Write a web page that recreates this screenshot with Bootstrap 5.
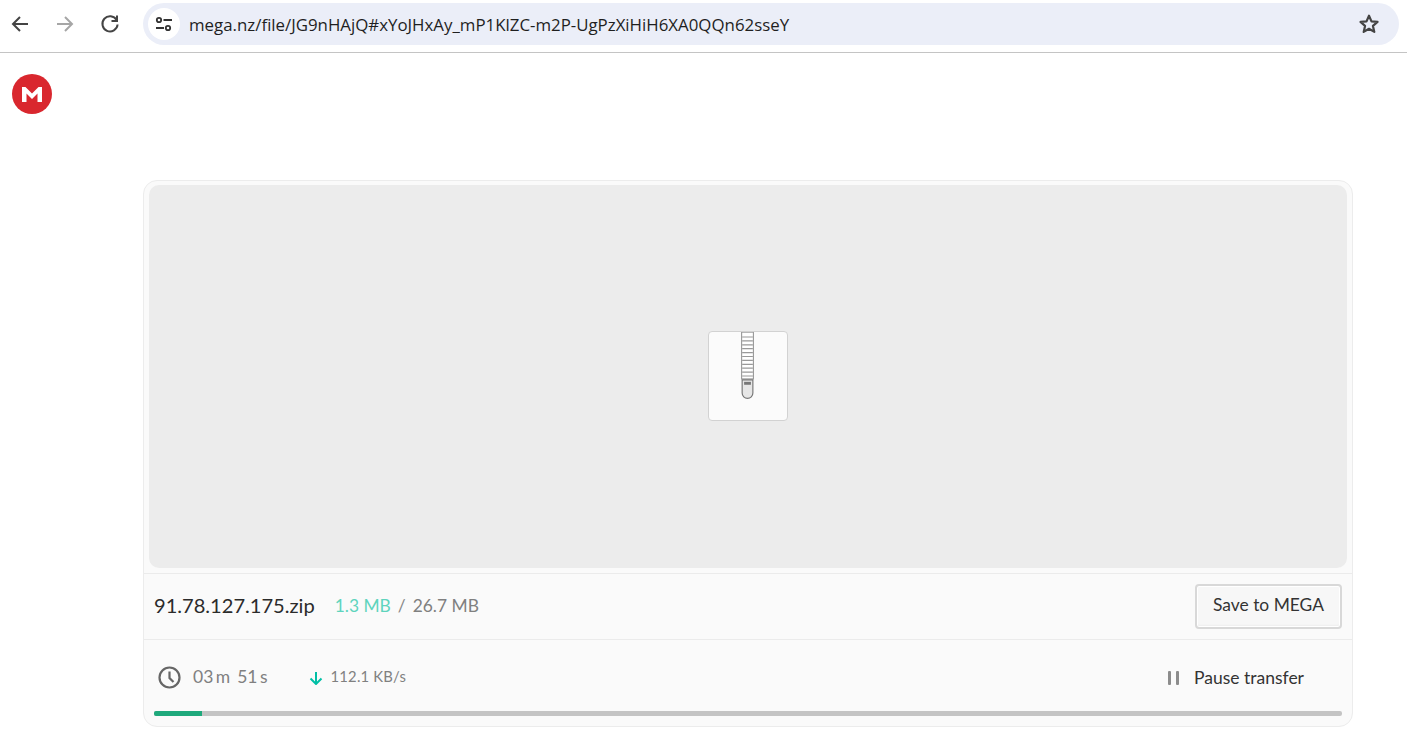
<!DOCTYPE html>
<html lang="en">
<head>
<meta charset="utf-8">
<title>MEGA</title>
<link href="https://cdn.jsdelivr.net/npm/bootstrap@5.3.0/dist/css/bootstrap.min.css" rel="stylesheet">
<style>
html,body{height:730px;overflow:hidden;background:#fff;}
body{font-family:Lato,"Liberation Sans",sans-serif;color:#333;}
.chrome-bar{height:53px;border-bottom:1px solid #c4c4c4;padding:3px 8px 0 0;align-items:flex-start;}
.nav-ico{width:20px;height:20px;flex:none;margin-top:11px;}
.ico-back{margin-left:10px;}
.ico-fwd{margin-left:25px;}
.ico-reload{margin-left:25px;}
.omnibox{margin-left:23px;height:42px;flex:1;background:#ebeef8;border-radius:21px;padding:0 19px 0 5px;}
.tune-chip{width:32px;height:32px;border-radius:50%;background:#fff;flex:none;}
.url-text{font-family:"Open Sans",sans-serif;font-size:16.85px;color:#1f1f1f;margin-left:9px;padding-top:1px;white-space:nowrap;}
.logo-row{height:127px;padding:21px 0 0 12px;}
.file-card{margin-left:143px;width:1210px;height:547px;border:1px solid #ececec;border-radius:14px;background:#fafafa;overflow:hidden;}
.preview-pane{margin:4px 5px 5px;height:383px;background:#ececec;border-radius:10px;}
.zip-tile{width:80px;height:90px;background:#fbfbfb;border:1px solid #d2d2d2;border-radius:4px;display:block;margin-top:-1px;}
.info-row{height:66px;border-top:1px solid #ebebeb;padding:0 10px 0 10px;}
.file-name{font-size:20.1px;color:#2b2b2b;line-height:1;margin-top:-2px;}
.got-size{font-size:17.4px;color:#5ed4bd;margin-left:20px;margin-top:-1px;}
.size-sep{font-size:17.4px;color:#888;margin:-1px 7px 0;}
.total-size{font-size:17.4px;color:#808080;margin-top:-1px;}
.save-btn{width:147px;height:45px;font-size:17.4px;color:#333;background:#f7f7f7;border:2px solid #d8d8d8;border-radius:4px;padding:0 0 2px;box-shadow:inset 0 0 0 1px #fff,inset 0 -2px 2px #eee;}
.transfer-row{height:72px;border-top:1px solid #ebebeb;padding:4px 48px 0 13px;}
.time-text{font-size:17.5px;color:#808080;margin-left:11px;word-spacing:-2px;}
.time-text span{margin-right:7px;}
.down-ico{margin-left:41px;}
.speed-text{font-size:14.8px;color:#808080;margin-left:8px;letter-spacing:.2px;margin-top:-3px;}
.pause-text{font-size:17.5px;color:#333;margin-left:15px;padding-top:2px;}
.track{height:5px;margin:0 10px;background:#c4c4c4;border-radius:2px;overflow:hidden;}
.track-fill{height:100%;background:#1fa97c;}
</style>
</head>
<body>
<div class="chrome-bar d-flex">
  <svg class="nav-ico ico-back" viewBox="0 0 20 20" fill="none" stroke="#444" stroke-width="2"><path d="M18 10H3M10 3l-7 7 7 7"/></svg>
  <svg class="nav-ico ico-fwd" viewBox="0 0 20 20" fill="none" stroke="#a6a6a6" stroke-width="2"><path d="M2 10h15M10 3l7 7-7 7"/></svg>
  <svg class="nav-ico ico-reload" viewBox="0 0 20 20" fill="none" stroke="#444" stroke-width="2"><path d="M16.6 6A7.6 7.6 0 1 0 17.6 10.500"/><path d="M17 1.500V7h-5.500" /></svg>
  <div class="omnibox d-flex align-items-center">
    <div class="tune-chip d-flex align-items-center justify-content-center">
      <svg width="18" height="16" viewBox="0 0 18 16" fill="none" stroke="#333" stroke-width="1.800"><circle cx="4" cy="4" r="2.200"/><path d="M8.500 4H17M1 12h8"/><circle cx="13" cy="12" r="2.200"/></svg>
    </div>
    <div class="url-text flex-grow-1">mega.nz/file/JG9nHAjQ#xYoJHxAy_mP1KlZC-m2P-UgPzXiHiH6XA0QQn62sseY</div>
    <svg width="22" height="22" viewBox="0 0 24 24" fill="none" stroke="#444" stroke-width="2.400" stroke-linejoin="round"><path d="M12 3l2.700 6.100 6.600.6-5 4.400 1.500 6.500L12 17.200 6.200 20.600l1.500-6.500-5-4.400 6.600-.6z"/></svg>
  </div>
</div>
<div class="logo-row">
  <svg width="40" height="40" viewBox="0 0 40 40"><circle cx="20" cy="20" r="20" fill="#d9272e"/><path d="M10 28V13h3.500L20 19.500 26.500 13H30v15h-4.500v-8.500L20 25l-5.500-5.500V28z" fill="#fff"/></svg>
</div>
<div class="file-card">
  <div class="preview-pane d-flex align-items-center justify-content-center">
    <svg class="zip-tile" viewBox="0 0 80 90">
      <rect x="33.500" y="0" width="12" height="48" fill="#fff" stroke="#8a8a8a"/>
      <path d="M34 5h11M34 9h11M34 13h11M34 17h11M34 21h11M34 25h11M34 29h11M34 33h11M34 37h11M34 41h11M34 45h11" stroke="#999" stroke-width="1.200"/>
      <path d="M34 49h11v13.500a5.500 5.500 0 0 1-11 0z" fill="#e6e6e6" stroke="#777" stroke-width="1.200"/>
      <rect x="36" y="51" width="7" height="3" fill="#777"/>
    </svg>
  </div>
  <div class="info-row d-flex align-items-center">
    <span class="file-name">91.78.127.175.zip</span>
    <span class="got-size">1.3 MB</span><span class="size-sep">/</span><span class="total-size">26.7 MB</span>
    <button type="button" class="btn save-btn ms-auto">Save to MEGA</button>
  </div>
  <div class="transfer-row d-flex align-items-center">
    <svg width="25" height="25" viewBox="0 0 25 25" fill="none" stroke="#666" stroke-width="2.200"><circle cx="12.500" cy="12.500" r="10"/><path d="M12.500 6.500v6.500l4 4"/></svg>
    <div class="time-text"><span>03 m</span>51 s</div>
    <svg class="down-ico" width="14" height="14" viewBox="0 0 14 14" fill="none" stroke="#00bfa5" stroke-width="2"><path d="M7 1v11.500M1.500 7.500L7 13l5.500-5.500"/></svg>
    <div class="speed-text">112.1 KB/s</div>
    <svg class="ms-auto" width="11" height="14" viewBox="0 0 11 14" fill="#8c8c8c"><rect x="0" y="0" width="3" height="14" rx="1"/><rect x="8" y="0" width="3" height="14" rx="1"/></svg>
    <div class="pause-text">Pause transfer</div>
  </div>
  <div class="track"><div class="track-fill" style="width:4.040%"></div></div>
</div>
<script src="https://cdn.jsdelivr.net/npm/bootstrap@5.3.0/dist/js/bootstrap.bundle.min.js"></script>
</body>
</html>
